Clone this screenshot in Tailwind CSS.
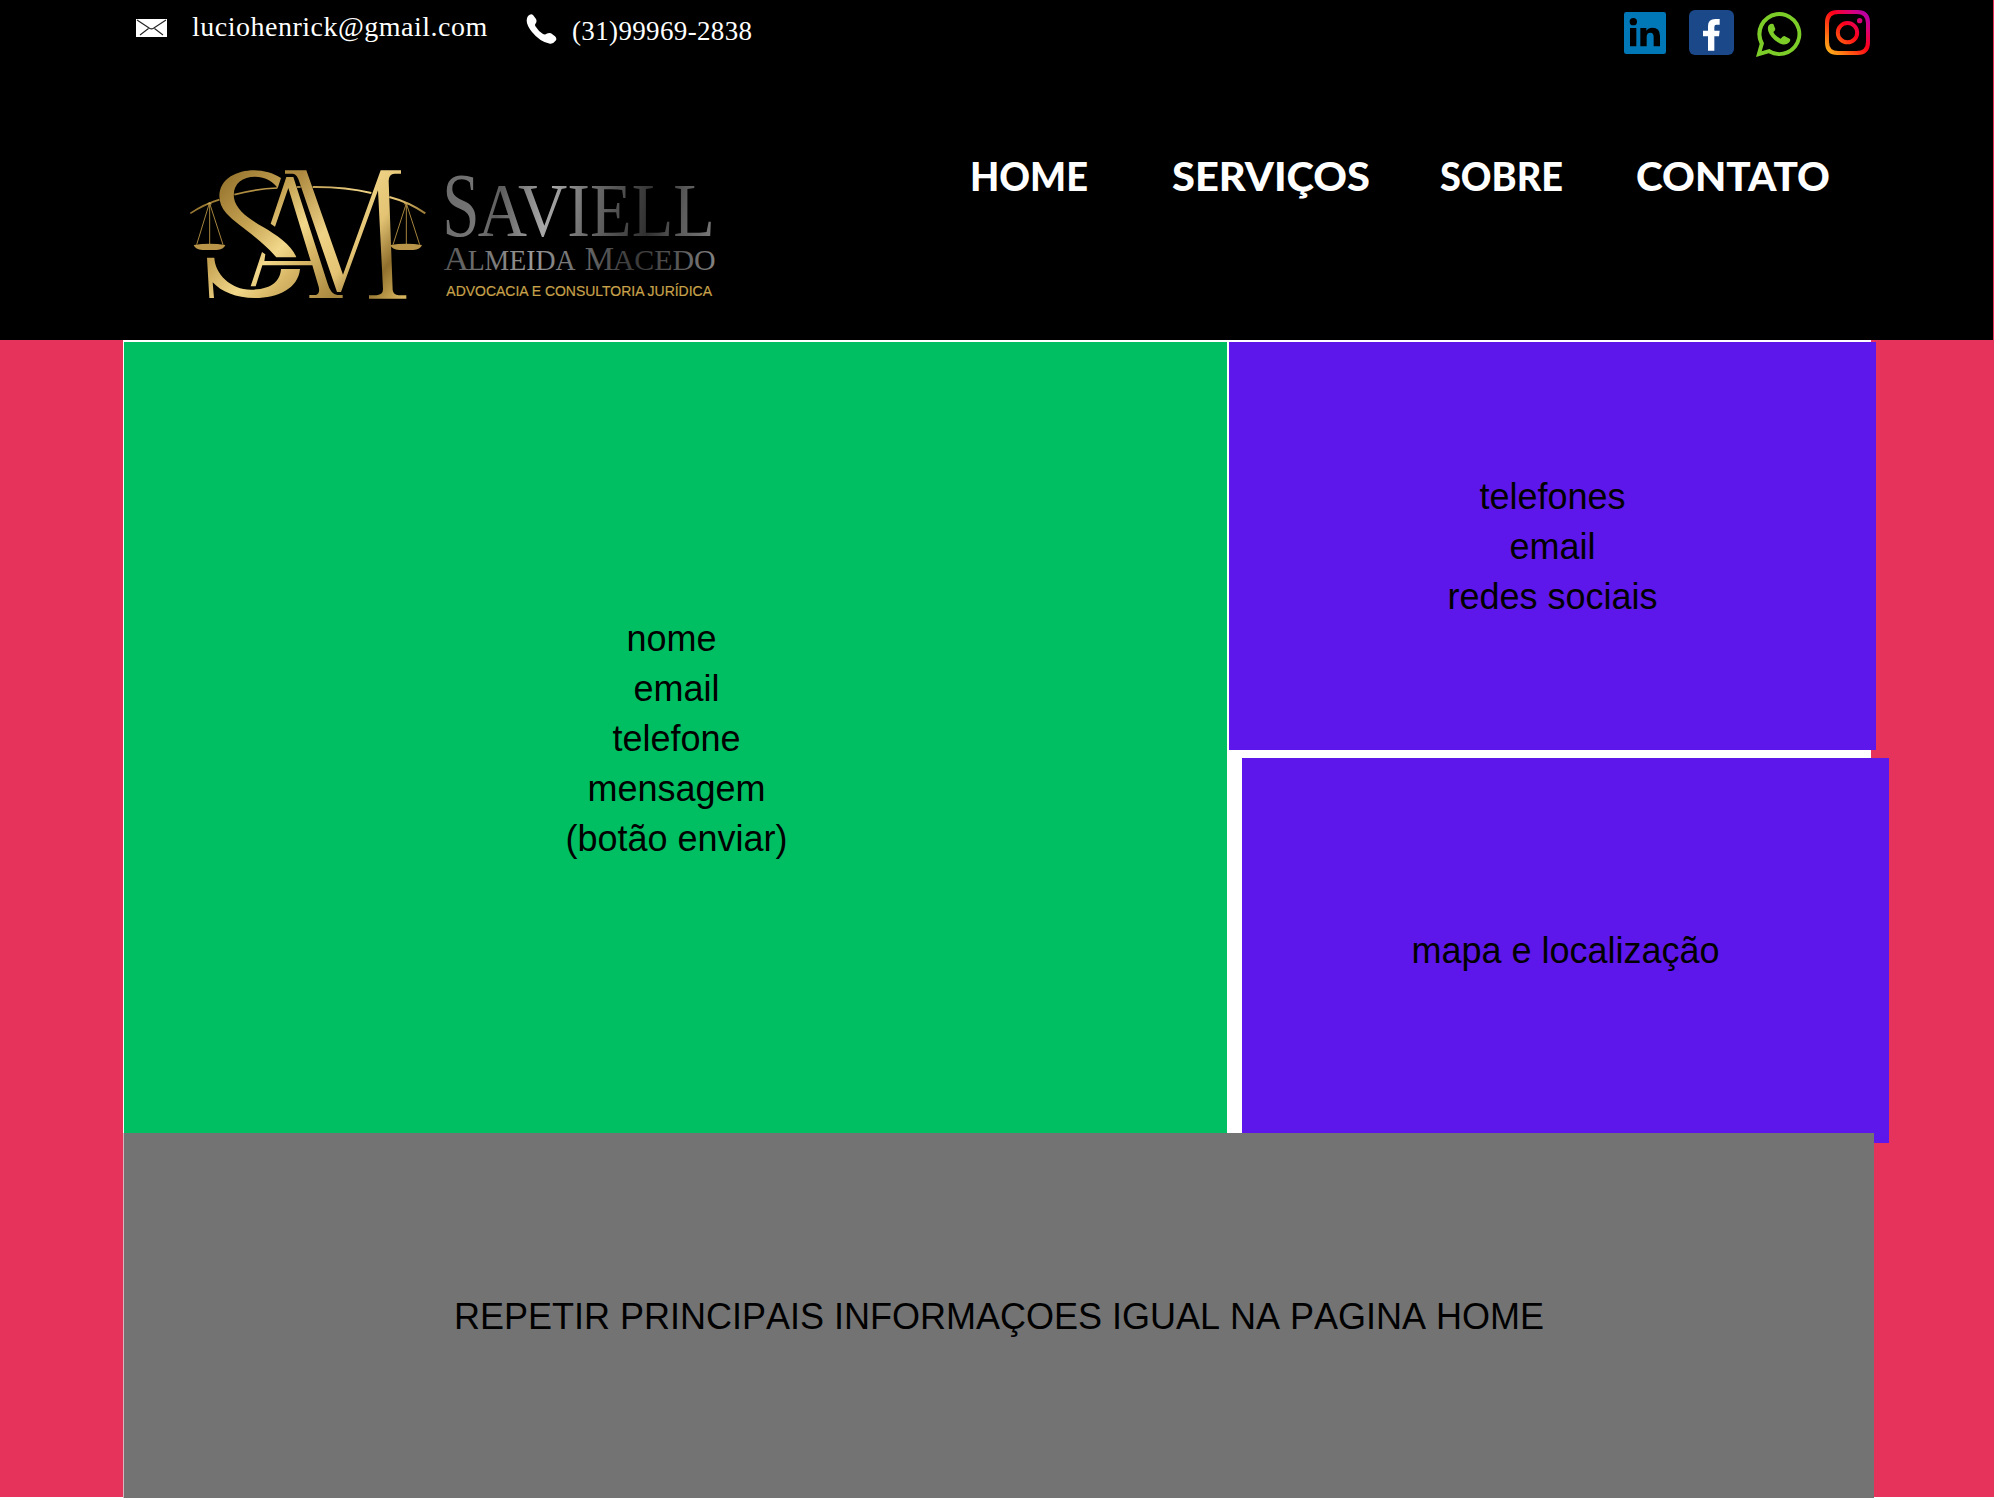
<!DOCTYPE html>
<html lang="pt-BR">
<head>
<meta charset="utf-8">
<title>Saviell Almeida Macedo - Contato</title>
<script src="https://cdn.jsdelivr.net/npm/@tailwindcss/browser@4"></script>
</head>
<body class="bg-white w-[2000px] h-[1500px] overflow-hidden font-['Liberation_Sans',sans-serif] text-black">
<div class="w-[1994px] h-[1497px] bg-[#e6335c]">
  <header class="w-[1993px] h-[340px] bg-black flex flex-col">
    <!-- contact bar -->
    <div class="h-[70px] flex items-start justify-between pl-[136px] pr-[123px] text-white font-['Liberation_Serif',serif]">
      <div class="flex items-start">
        <svg class="w-[31px] h-[18px] mt-[19px]" viewBox="0 0 31 18"><path fill="#fff" d="M0 0h31v18H0z"/><path fill="none" stroke="#222" stroke-width="1.1" d="M1 1l12.500 8.300q2 1.200 4 0L30 1M4 16l8.500-6.500M27 16l-8.500-6.500"/></svg>
        <span class="ml-[25px] mt-[11px] w-[297px] text-[28px] leading-[32px] tracking-[0.5px] whitespace-nowrap">luciohenrick@gmail.com</span>
        <svg class="w-[31px] h-[31px] ml-[37px] mt-[14px]" viewBox="0 0 31 31"><path fill="#fff" d="M2 2Q5-1 7 1l3 4q1 2 0 4-2 2 0 4 3 5 7 7 2 1 4-.5 2-1 4-.2l4 3q2 2 1 4-3 4-6 3.500Q14 28 6 18-2 8 2 2Z"/></svg>
        <span class="ml-[15px] mt-[16px] text-[27px] leading-[31px] tracking-[0.350px] whitespace-nowrap">(31)99969-2838</span>
      </div>
      <div class="flex items-start">
        <svg class="w-[42px] h-[42px] mt-[12px]" viewBox="0 0 126 126"><rect width="126" height="126" rx="7" fill="#0078b8"/><circle cx="28" cy="29" r="11"/><path d="M18 48h19v55H18zM49 48h18v8q6-9 18-9 23 0 23 25v31H89V75q0-13-10-13-11 0-11 13v28H49z"/></svg>
        <svg class="w-[45px] h-[45px] ml-[23px] mt-[10px]" viewBox="0 0 135 135"><rect width="135" height="135" rx="18" fill="#1b4889"/><path fill="#fff" d="M57 122V79H42V62h15V48q0-21 22-21h13v17H82q-6 0-6 7v11h16l-2 17H76v43z"/></svg>
        <svg class="w-[46px] h-[46px] ml-[22px] mt-[12px]" viewBox="0 0 138 138"><path fill="#7dcd29" fill-rule="evenodd" d="M0 135l11-39A66 66 0 1 1 38 124ZM17 118l23-7A54 54 0 1 0 24 94Z"/><path fill="#7dcd29" d="M39 39q7-6 13-3l6 15q0 4-6 9 6 13 22 20 7-9 11-8l16 8q4 3-1 11-9 9-22 6Q54 88 41 67 31 49 39 39Z"/></svg>
        <svg class="w-[45px] h-[45px] ml-[23px] mt-[10px]" viewBox="0 0 135 135"><defs><linearGradient id="ig" x1="0" y1="1" x2="1" y2="0"><stop offset="0" stop-color="#ffc81e"/><stop offset=".3" stop-color="#ff5a10"/><stop offset=".55" stop-color="#ff0018"/><stop offset=".78" stop-color="#d8007c"/><stop offset="1" stop-color="#a000c0"/></linearGradient></defs><path fill="url(#ig)" fill-rule="evenodd" d="M38 0h59q38 0 38 38v59q0 38-38 38H38Q0 135 0 97V38Q0 0 38 0Zm2 12Q12 12 12 40v55q0 28 28 28h55q28 0 28-28V40q0-28-28-28ZM67.500 33a35 35 0 1 1 0 70 35 35 0 0 1 0-70Zm0 12a23 23 0 1 0 0 46 23 23 0 0 0 0-46ZM104 24a8 8 0 1 1 0 16 8 8 0 0 1 0-16Z"/></svg>
      </div>
    </div>
    <div class="flex items-start pl-[180px]">
      <!-- brand -->
      <svg class="w-[550px] h-[160px] mt-[80px] shrink-0 overflow-visible" viewBox="0 0 1650 480">
        <defs>
          <linearGradient id="gold" gradientUnits="userSpaceOnUse" x1="120" y1="100" x2="460" y2="440"><stop offset="0" stop-color="#98762f"/><stop offset=".3" stop-color="#c5a252"/><stop offset=".55" stop-color="#f2d88b"/><stop offset=".7" stop-color="#d9b968"/><stop offset="1" stop-color="#a8873f"/></linearGradient>
          <linearGradient id="goldM" gradientUnits="userSpaceOnUse" x1="340" y1="100" x2="700" y2="400"><stop offset="0" stop-color="#ad8a40"/><stop offset=".35" stop-color="#eed285"/><stop offset=".58" stop-color="#e4c474"/><stop offset=".8" stop-color="#8f6f2c"/><stop offset="1" stop-color="#d6b45e"/></linearGradient>
          <linearGradient id="s1" gradientUnits="userSpaceOnUse" x1="800" y1="100" x2="1600" y2="250"><stop offset="0" stop-color="#6c6c6c"/><stop offset=".15" stop-color="#777"/><stop offset=".2" stop-color="#5c5c5c"/><stop offset=".38" stop-color="#a8a8a8"/><stop offset=".52" stop-color="#707070"/><stop offset=".62" stop-color="#555"/><stop offset=".76" stop-color="#303030"/><stop offset=".88" stop-color="#5c5c5c"/><stop offset="1" stop-color="#777"/></linearGradient>
          <linearGradient id="s2" gradientUnits="userSpaceOnUse" x1="790" y1="0" x2="1610" y2="0"><stop offset="0" stop-color="#555"/><stop offset=".32" stop-color="#999"/><stop offset=".55" stop-color="#606060"/><stop offset=".7" stop-color="#383838"/><stop offset=".85" stop-color="#555"/><stop offset="1" stop-color="#858585"/></linearGradient>
        </defs>
        <!-- beam of the scales -->
        <path fill="none" stroke="url(#gold)" stroke-width="5" d="M31 190Q72 163 118 149M163 134Q224 117 292 114M350 111h12"/>
        <path fill="none" stroke="url(#goldM)" stroke-width="6" d="M398 111Q495 110 574 129M628 141Q686 156 736 190"/>
        <g fill="none" stroke="#a5843d" stroke-width="3"><path d="M88 160L50 284M89 160v122M89 160l40 124M679 160l-40 124M679 160v122M679 160l40 124"/></g>
        <path fill="#b99549" d="M41 285q48-7 95 0-5 14-26 15H67q-21-1-26-15ZM631 285q48-7 95 0-5 14-26 15h-43q-21-1-26-15Z"/>
        <path fill="#c7a456" d="M80 163l8-7 9 7zM670 163l9-7 8 7z"/>
        <!-- letter S -->
        <path fill="url(#gold)" d="M303 84C260 55 195 52 152 79C112 104 107 154 139 190C171 226 238 262 289 322H349C337 287 291 255 248 230C205 205 168 180 162 144C157 103 185 80 225 80C257 80 282 96 293 115Z"/>
        <path fill="url(#gold)" d="M81 323h22c2 48 49 96 110 96 62 0 88-27 90-62h57c-5 58-66 87-135 87-58 0-101-19-127-47l4 47H88Z"/>
        <!-- letter A -->
        <path fill="url(#gold)" d="M272 221L319 81h21l103 320q9 31 29 34h16v9H388v-9h20q13-4 8-25l-19-64H247l-20 63h-15l34-103 10 7-3 20h139L325 114 285 230Z"/>
        <!-- letter M -->
        <path fill="url(#goldM)" d="M315 61h64l110 313L602 61h61v10h-19q-18 1-18 22l12 327q2 15 18 16h23v10H567v-10h23q19-2 19-18L594 121 483 426h-12L359 98q-7-25-20-27h-24Z"/>
        <g font-family="'Liberation Serif',serif">
          <text x="787" y="259" font-size="270" fill="url(#s1)" textLength="112" lengthAdjust="spacingAndGlyphs">S</text>
          <text x="893" y="258" font-size="230" fill="url(#s1)" textLength="712" lengthAdjust="spacingAndGlyphs">AVIELL</text>
          <g fill="url(#s2)"><text x="791" y="359" font-size="104" textLength="76" lengthAdjust="spacingAndGlyphs">A</text><text x="863" y="359" font-size="91" textLength="324" lengthAdjust="spacingAndGlyphs">LMEIDA</text><text x="1214" y="359" font-size="104" textLength="88" lengthAdjust="spacingAndGlyphs">M</text><text x="1298" y="359" font-size="91" textLength="309" lengthAdjust="spacingAndGlyphs">ACEDO</text></g>
        </g>
        <text x="799" y="439" font-family="'Liberation Sans',sans-serif" font-size="45" fill="#c8a24a" stroke="#c8a24a" stroke-width=".6" textLength="797" lengthAdjust="spacingAndGlyphs">ADVOCACIA E CONSULTORIA JURÍDICA</text>
      </svg>
      <!-- navigation -->
      <nav class="mt-[80px] ml-[238px]">
        <svg class="w-[866px] h-[56px]" viewBox="968 150 866 56" fill="#fff" font-family="Lato,sans-serif" font-weight="900" font-size="39">
          <text x="970" y="190.500" textLength="118" lengthAdjust="spacingAndGlyphs">HOME</text>
          <text x="1172" y="190.500" textLength="198" lengthAdjust="spacingAndGlyphs">SERVIÇOS</text>
          <text x="1440" y="190.500" textLength="123" lengthAdjust="spacingAndGlyphs">SOBRE</text>
          <text x="1636" y="190.500" textLength="194" lengthAdjust="spacingAndGlyphs">CONTATO</text>
        </svg>
      </nav>
    </div>
  </header>
  <main class="ml-[123px] w-[1748px] h-[793px] pl-px pt-[2px] bg-white flex items-start text-[36px] leading-[50px] text-center">
    <section class="w-[1103px] h-[791px] pt-[2px] pl-[2px] shrink-0 bg-[#00bf63] flex flex-col justify-center">
      <p>nome&nbsp;</p><p>email</p><p>telefone</p><p>mensagem</p><p>(botão enviar)</p>
    </section>
    <div class="ml-[2px] shrink-0 flex flex-col gap-2">
      <section class="w-[647px] h-[408px] pt-px bg-[#5e17eb] flex flex-col justify-center">
        <p>telefones</p><p>email</p><p>redes sociais</p>
      </section>
      <section class="ml-[13px] w-[647px] h-[385px] pt-px bg-[#5e17eb] flex flex-col justify-center">
        <p>mapa e localização</p>
      </section>
    </div>
  </main>
  <footer class="relative ml-[123px] w-[1751px] h-[365px] pt-[2px] border-l border-[#d9b4bd] bg-[#737373] flex items-center justify-center text-[36px] leading-[50px]">
    <p class="[font-kerning:none]">REPETIR PRINCIPAIS INFORMAÇOES IGUAL NA PAGINA HOME</p>
  </footer>
</div>
</body>
</html>
